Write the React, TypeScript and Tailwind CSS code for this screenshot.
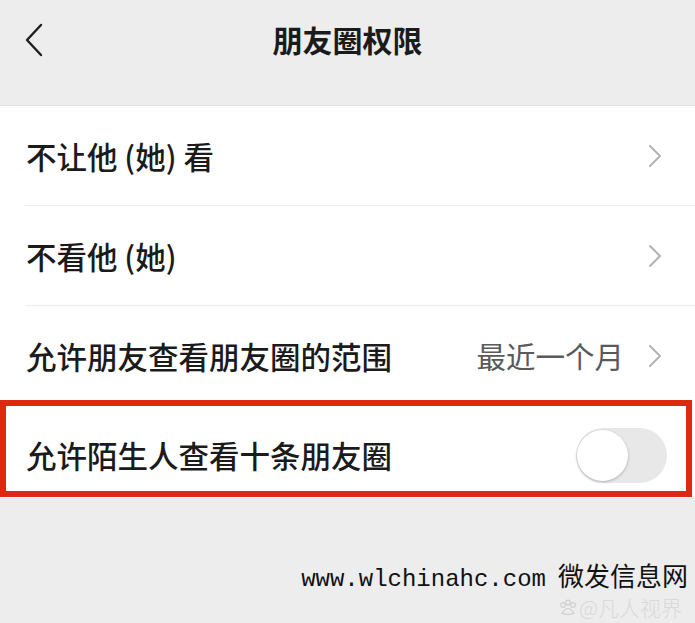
import React from "react";

const cjk = { fontFamily: '"Noto Sans CJK SC", "Noto Sans", sans-serif' };

function Chevron() {
  return (
    <svg width="14" height="24" viewBox="0 0 14 24" className="shrink-0">
      <polyline points="2,2 12,12 2,22" fill="none" stroke="#b3b3b3" strokeWidth="2" strokeLinecap="round" strokeLinejoin="round" />
    </svg>
  );
}

function Row({ label, value, divider = true }: { label: string; value?: string; divider?: boolean }) {
  return (
    <div className="relative h-[100px] flex items-center pl-[26px] pr-[33px]">
      <span className="text-[30.5px] font-medium text-[#1b1b1b] leading-none flex-1" style={cjk}>
        {label}
      </span>
      {value && (
        <span className="text-[29.5px] text-[#5a5a5a] leading-none mr-[24px]" style={cjk}>
          {value}
        </span>
      )}
      <Chevron />
      {divider && <div className="absolute left-[25px] right-0 bottom-0 h-px bg-[#ececec]" />}
    </div>
  );
}

export default function App() {
  return (
    <div className="w-[695px] h-[623px] bg-[#ededed] flex flex-col overflow-hidden relative">
      <div className="h-[106px] border-b border-[#e2e2e2] relative flex justify-center pt-[24px]">
        <svg width="20" height="34" viewBox="0 0 20 34" className="absolute left-[24px] top-[23px]">
          <polyline points="17,2 3,17 17,32" fill="none" stroke="#1e1e1e" strokeWidth="2.4" strokeLinecap="round" strokeLinejoin="round" />
        </svg>
        <span className="text-[30px] font-bold text-[#1b1b1b] leading-none" style={cjk}>
          朋友圈权限
        </span>
      </div>
      <div className="bg-white">
        <Row label="不让他 (她) 看" />
        <Row label="不看他 (她)" />
        <Row label="允许朋友查看朋友圈的范围" value="最近一个月" divider={false} />
        <div className="h-[92px] flex items-center pl-[26px] pr-[28px] pt-[6px]">
          <span className="text-[30.5px] font-medium text-[#1b1b1b] leading-none flex-1" style={cjk}>
            允许陌生人查看十条朋友圈
          </span>
          <div className="w-[91px] h-[55px] rounded-full bg-[#e8e8e8] relative">
            <div className="absolute left-[1px] top-[2px] w-[51px] h-[51px] rounded-full bg-white shadow-[0_1px_3px_rgba(0,0,0,0.25)]" />
          </div>
        </div>
      </div>
      <div className="absolute left-0 top-[400px] w-[692px] h-[97px] border-[6px] border-[#dc2a12]" />
      <div className="flex-1 flex flex-col items-end pr-[7px] pt-[64px]">
        <div className="flex items-baseline text-[#111] leading-none">
          <span className="text-[24px]" style={{ fontFamily: '"Liberation Mono", monospace' }}>www.wlchinahc.com</span>
          <span className="text-[26px] ml-[12px]" style={cjk}>微发信息网</span>
        </div>
        <div className="flex items-center mt-[5px] mr-[6px] gap-[2px]">
          <svg width="18" height="18" viewBox="0 0 18 18">
            <circle cx="4" cy="6" r="2.3" fill="none" stroke="#cfcfcf" strokeWidth="1.2" />
            <circle cx="9" cy="3.5" r="2.3" fill="none" stroke="#cfcfcf" strokeWidth="1.2" />
            <circle cx="14" cy="6" r="2.3" fill="none" stroke="#cfcfcf" strokeWidth="1.2" />
            <path d="M3,14 Q9,5 15,14 Q9,17 3,14Z" fill="none" stroke="#cfcfcf" strokeWidth="1.2" />
          </svg>
          <span className="text-[21px] text-[#d9d9d9] leading-none" style={{ ...cjk, fontWeight: 300 }}>
            @凡人视界
          </span>
        </div>
      </div>
    </div>
  );
}
